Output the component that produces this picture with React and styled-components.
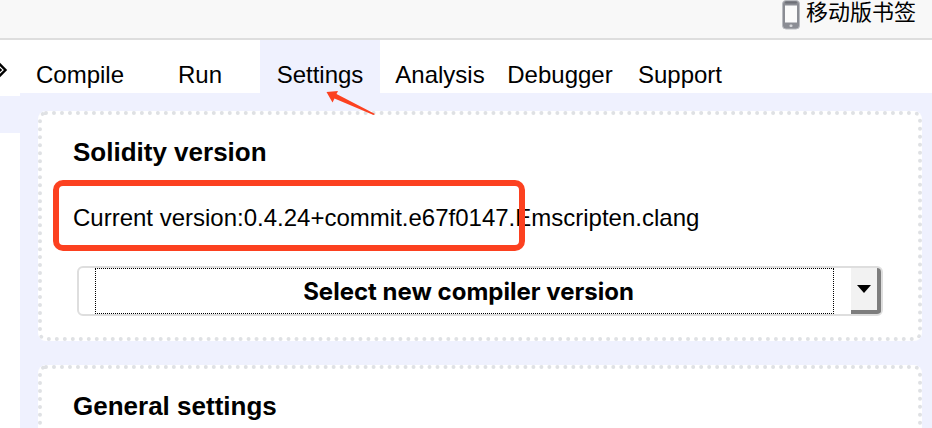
import styled, { createGlobalStyle } from 'styled-components';

const tabs = ['Compile', 'Run', 'Settings', 'Analysis', 'Debugger', 'Support'];

export default function App() {
    return (
        <>
            <GlobalStyle />
            <BookmarksBar>
                <Bookmark href='#bookmarks'>
                    <PhoneIcon />
                    移动版书签
                </Bookmark>
            </BookmarksBar>
            <Page>
                <Side>
                    <Toggle aria-label='Toggle right panel'>
                        <svg width='8' height='20' viewBox='0 0 8 20' aria-hidden='true'>
                            <path d='M-1 3.5L5.5 10L-1 16.5M-4 6L0.5 10L-4 14' fill='none' stroke='#000' strokeWidth='2.4' />
                        </svg>
                    </Toggle>
                    <SideGap />
                    <SideBody />
                </Side>
                <Panel>
                    <Tabs>
                        {tabs.map((tab) => (
                            <Tab key={tab} $active={tab === 'Settings'}>
                                {tab}
                                {tab === 'Settings' && <Pointer />}
                            </Tab>
                        ))}
                    </Tabs>
                    <Cards>
                        <Card>
                            <h2>Solidity version</h2>
                            <Version>
                                Current version:0.4.24+commit.e67f0147.Emscripten.clang
                                <Highlight />
                            </Version>
                            <SelectBox>
                                <select aria-label='Compiler version'>
                                    <option>Select new compiler version</option>
                                </select>
                                <SelectArrow>
                                    <svg width='14' height='8' viewBox='0 0 14 8' aria-hidden='true'>
                                        <path d='M0 0H14L7 8Z' fill='#000' />
                                    </svg>
                                </SelectArrow>
                            </SelectBox>
                        </Card>
                        <Card>
                            <h2>General settings</h2>
                        </Card>
                    </Cards>
                </Panel>
            </Page>
        </>
    )
}

function PhoneIcon() {
    return (
        <svg width='18' height='30' viewBox='0 0 18 30' aria-hidden='true'>
            <rect x='0.5' y='0.5' width='17' height='28.5' rx='3.5' fill='#8b8d94' stroke='#b9bbc0' />
            <rect x='3' y='5.5' width='12' height='17' fill='#fbfbfb' />
            <rect x='3' y='1.5' width='12' height='2' rx='1' fill='#6d6f76' />
            <rect x='7.5' y='24.5' width='3' height='2.5' rx='1' fill='#d5d6da' />
        </svg>
    )
}

function Pointer() {
    return (
        <PointerSvg width='50' height='26' viewBox='0 0 50 26' aria-hidden='true'>
            <path d='M0.500 1L12 0L10.500 3L49 23L47.500 24L8.500 7.500L6.500 11.500Z' fill='#fc4120' />
        </PointerSvg>
    )
}

const GlobalStyle = createGlobalStyle`
    * {
        box-sizing: border-box;
    }

    html, body, #root {
        height: 100%;
    }

    body {
        margin: 0;
        overflow: hidden;
        background: #fff;
        color: #000;
        font-family: 'Liberation Sans', 'Noto Sans CJK SC', sans-serif;
        font-size: 24px;
    }

    #root {
        display: flex;
        flex-direction: column;
    }
`
const BookmarksBar = styled.header`
    flex: none;
    height: 40px;
    display: flex;
    justify-content: flex-end;
    align-items: flex-start;
    padding-right: 16px;
    background: #f8f8f8;
    border-bottom: 2px solid #dedede;
`
const Bookmark = styled.a`
    display: flex;
    gap: 6px;
    color: #000;
    font-family: 'Noto Sans CJK SC', sans-serif;
    font-size: 22px;
    line-height: 20px;
    text-decoration: none;
`
const Page = styled.main`
    flex: 1;
    display: flex;
    min-height: 0;
`
const Side = styled.div`
    flex: none;
    width: 20px;
    display: flex;
    flex-direction: column;
`
const Toggle = styled.button`
    height: 56px;
    padding: 4px 0 0;
    border: none;
    background: #fff;
    display: flex;
    align-items: center;
`
const SideGap = styled.div`
    height: 37px;
    background: #eff1fe;
`
const SideBody = styled.div`
    flex: 1;
    background: #fff;
`
const Panel = styled.section`
    flex: 1;
    min-width: 0;
    background: #eff1fe;
`
const Tabs = styled.nav`
    display: flex;
    height: 53px;
    background: #fff;
`
const Tab = styled.button`
    position: relative;
    width: 120px;
    padding: 16px 0 0;
    border: none;
    background: ${(props) => (props.$active ? '#eff1fe' : 'transparent')};
    color: #000;
    font: inherit;
`
const PointerSvg = styled.svg`
    position: absolute;
    top: 51px;
    left: 66px;
`
const Cards = styled.div`
    display: flex;
    flex-direction: column;
    gap: 24px;
    padding: 18px 10px 0 18px;
`
const Card = styled.div`
    padding: 21px 35px 21px 31px;
    background: #fff;
    border: 4px dotted #dfe1e4;
    border-radius: 8px;

    h2 {
        margin: 0;
        font-size: 26px;
        line-height: 32px;
    }
`
const Version = styled.p`
    position: relative;
    margin: 34px 0 32px;
    line-height: 32px;
    white-space: nowrap;
`
const Highlight = styled.span`
    position: absolute;
    top: -22px;
    left: -20px;
    width: 472px;
    height: 71px;
    border: 6px solid #fc4120;
    border-radius: 10px;
`
const SelectBox = styled.div`
    display: flex;
    height: 50px;
    margin-left: 4px;
    padding-left: 16px;
    border: 2px solid #dedede;
    border-radius: 6px;

    select {
        flex: 1;
        min-width: 0;
        margin-right: 17px;
        padding: 0 0 0 8px;
        appearance: none;
        border: 1px dotted #000;
        border-radius: 0;
        background: #fff;
        color: #000;
        font-family: Inter, sans-serif;
        font-size: 24px;
        font-weight: 700;
        text-align: center;
        text-align-last: center;
    }
`
const SelectArrow = styled.span`
    flex: none;
    width: 30px;
    display: flex;
    align-items: center;
    justify-content: center;
    background: #f2f2f2;
    border: 0 solid #7d7d7d;
    border-width: 0 4px 4px 0;
    border-radius: 0 4px 4px 0;
`
